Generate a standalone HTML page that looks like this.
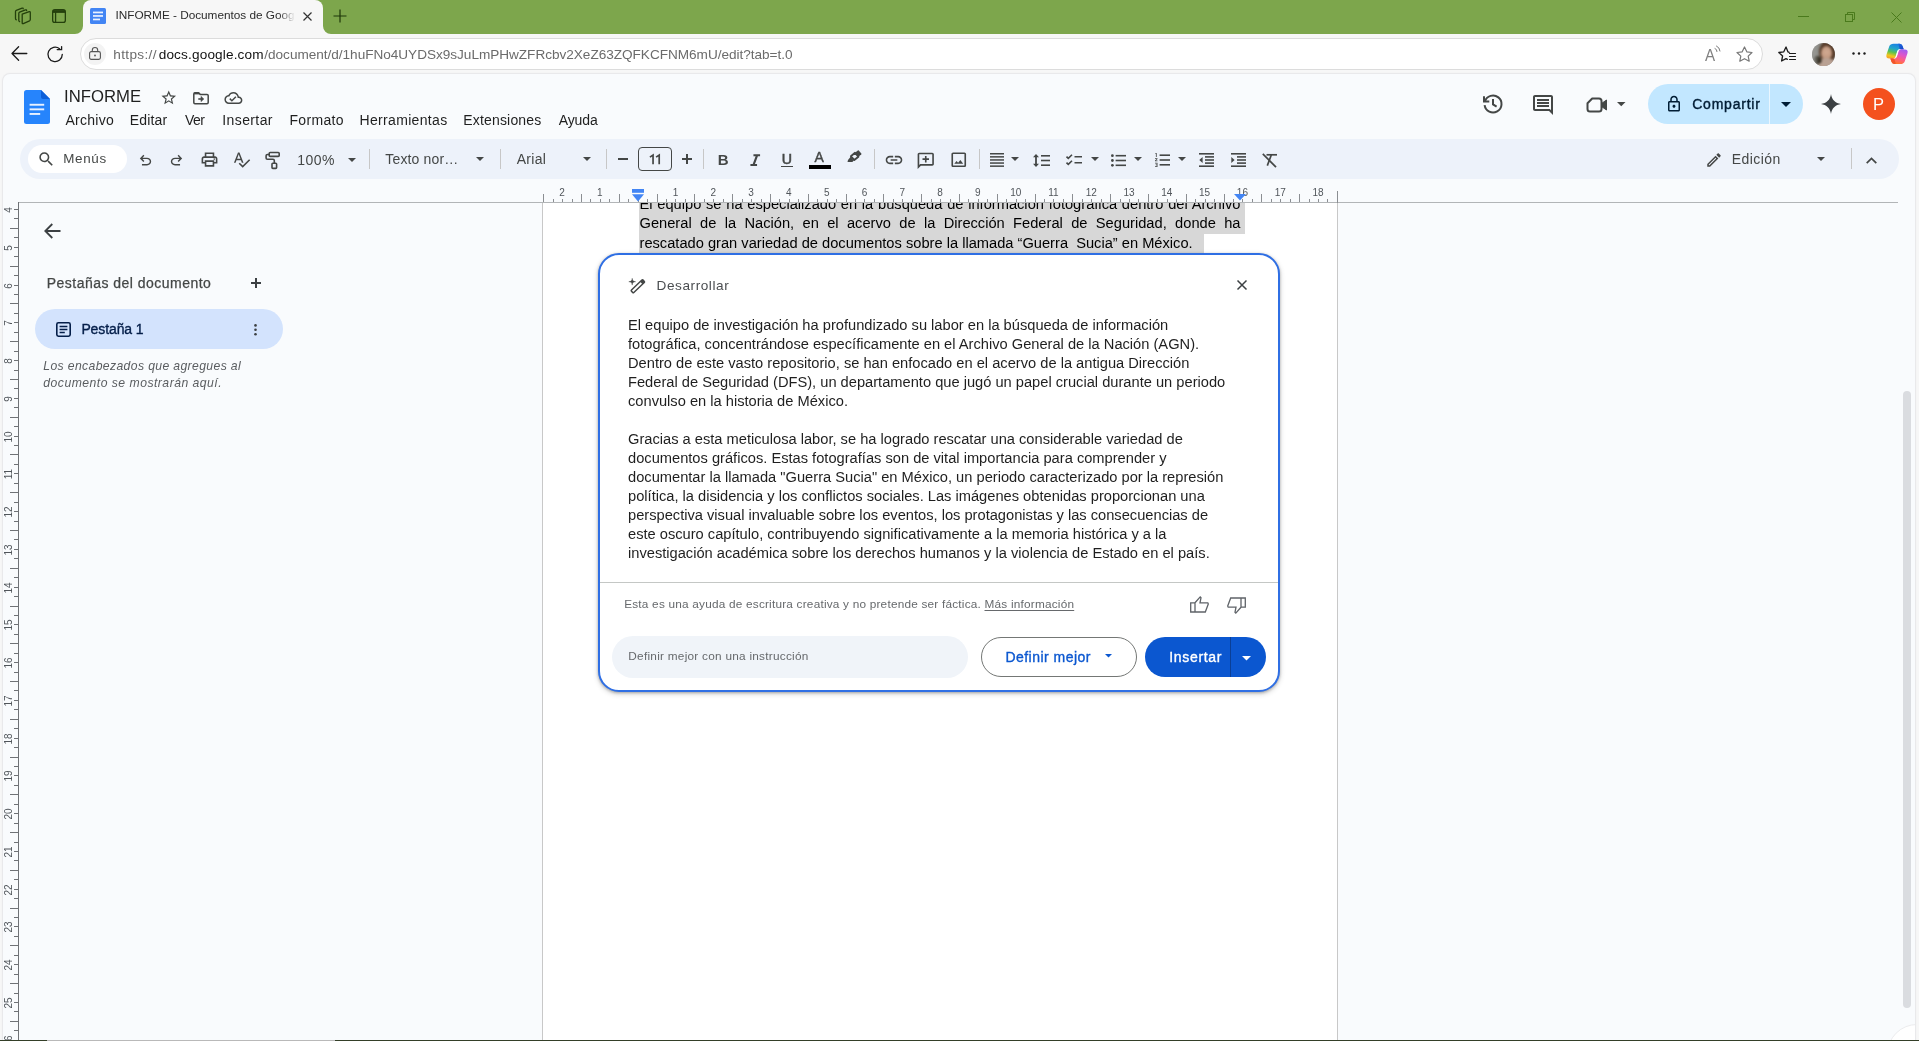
<!DOCTYPE html>
<html lang="es">
<head>
<meta charset="utf-8">
<title>INFORME - Documentos de Google</title>
<style>
*{box-sizing:border-box;margin:0;padding:0}
html,body{width:1919px;height:1041px;overflow:hidden;background:#f7f7f7;font-family:"Liberation Sans",sans-serif;color:#1f1f1f}
#root{position:absolute;left:0;top:0;width:1919px;height:1041px;overflow:hidden;will-change:transform}
.abs{position:absolute}
.t{position:absolute;white-space:nowrap;line-height:1;transform-origin:0 50%}
svg{position:absolute;overflow:visible}
/* ---------- browser chrome ---------- */
#titlebar{left:0;top:0;width:1919px;height:34px;background:#7da64c}
#tab{left:83px;top:0;width:240px;height:34px;background:#f7f7f7;border-radius:8px 8px 0 0}
#navbar{left:0;top:34px;width:1919px;height:41px;background:#f7f7f7}
#urlpill{left:80px;top:38px;width:1683px;height:32px;background:#fff;border:1px solid #dcdcdc;border-radius:16px}
.mn{top:113px;font-size:14px;color:#1f1f1f}
.rn{font-size:10px;color:#50555a}
.dl{position:absolute;left:0;width:601px;font-size:14.667px;line-height:19.400px;height:19.400px;color:#000}
.bl{left:628px;font-size:14.667px;line-height:19px;color:#1f1f1f}
/* ---------- docs app ---------- */
#app{left:3px;top:74px;width:1912px;height:967px;background:#f9fbfd;border-radius:7px 7px 0 0;box-shadow:0 0 0 1px #e9e9eb,0 0 3px rgba(0,0,0,.08)}
#toolbar{left:20px;top:139px;width:1879px;height:40px;background:#edf2fa;border-radius:20px}
#menus{left:28px;top:145px;width:99px;height:28px;background:#fff;border-radius:14px}
#page{left:542px;top:203px;width:796px;height:838px;background:#fff;border-left:1px solid #c8c8c8;border-right:1px solid #c8c8c8}
#rulerline{left:18px;top:202px;width:1880px;height:1px;background:#b2b5b7}
#vrulerline{left:18px;top:202px;width:1px;height:839px;background:#6f7276}
</style>
</head>
<body>
<div id="root">
<!-- BROWSER CHROME -->
<div class="abs" id="titlebar"></div>
<div class="abs" id="tab"></div>
<div class="abs" id="navbar"></div>
<div class="abs" id="urlpill"></div>

<!-- tab concave corners -->
<svg style="left:75px;top:26px" width="8" height="8"><path d="M8 0 V8 H0 A8 8 0 0 0 8 0Z" fill="#f7f7f7"/></svg>
<svg style="left:323px;top:26px" width="8" height="8"><path d="M0 0 V8 H8 A8 8 0 0 1 0 0Z" fill="#f7f7f7"/></svg>
<!-- workspaces icon -->
<svg style="left:14px;top:7px" width="18" height="18" viewBox="0 0 18 18" fill="none" stroke="#24400c" stroke-width="1.3" stroke-linejoin="round" stroke-linecap="round">
<path d="M8.2 7.2 L15.3 4.6 Q16.3 4.3 16.3 5.4 V12.6 Q16.3 13.4 15.5 13.8 L9.3 16.6 Q8.2 17 8.2 15.9 Z"/>
<path d="M12.6 3.6 Q12.6 2.5 11.5 2.9 L5.6 5.2 Q4.8 5.5 4.8 6.4 V13.6 Q4.8 14.4 5.6 14.7"/>
<path d="M9.2 1.8 Q9.2 0.8 8.1 1.2 L2.3 3.4 Q1.5 3.7 1.5 4.6 V11.6 Q1.5 12.5 2.3 12.8"/>
</svg>
<!-- tab actions icon -->
<svg style="left:52px;top:9px" width="14" height="14" viewBox="0 0 14 14" fill="none" stroke="#24400c" stroke-width="1.3">
<rect x="0.65" y="0.65" width="12.7" height="12.7" rx="2.2"/><path d="M1 2.500 H13" stroke-width="2.800"/><path d="M3.6 3 V13.3"/>
</svg>
<!-- favicon -->
<svg style="left:90px;top:8px" width="16" height="16" viewBox="0 0 16 16"><rect width="16" height="16" rx="1.5" fill="#4285f4"/><rect x="3" y="3.6" width="10" height="1.7" fill="#eaf2ff"/><rect x="3" y="7.1" width="10" height="1.7" fill="#eaf2ff"/><rect x="3" y="10.6" width="7" height="1.7" fill="#eaf2ff"/></svg>
<div class="t" id="tabtitle" style="left:115.50px;font-size:11.8px;letter-spacing:-0.021px;top:9.600px;color:#2b2b2b;width:180px;overflow:hidden;-webkit-mask-image:linear-gradient(90deg,#000 163px,transparent 179px);mask-image:linear-gradient(90deg,#000 163px,transparent 179px)">INFORME - Documentos de Google</div>
<svg style="left:303px;top:12px" width="9" height="9" viewBox="0 0 9 9" stroke="#333" stroke-width="1.2" fill="none"><path d="M0.5 0.5 L8.5 8.5 M8.5 0.5 L0.5 8.5"/></svg>
<svg style="left:333px;top:9px" width="14" height="14" viewBox="0 0 14 14" stroke="#1d3608" stroke-width="1.2" fill="none"><path d="M7 0.5 V13.5 M0.5 7 H13.5"/></svg>
<!-- window controls -->
<svg style="left:1798px;top:16px" width="11" height="1"><rect width="11" height="1" fill="#4a7a1c"/></svg>
<svg style="left:1845px;top:12px" width="10" height="10" viewBox="0 0 10 10" fill="none" stroke="#4a7a1c" stroke-width="1"><rect x="0.5" y="2.5" width="7" height="7"/><path d="M2.5 2.5 V0.5 H9.5 V7.5 H7.5"/></svg>
<svg style="left:1891px;top:12px" width="11" height="11" viewBox="0 0 11 11" stroke="#4a7a1c" stroke-width="1" fill="none"><path d="M0.5 0.5 L10.5 10.5 M10.5 0.5 L0.5 10.5"/></svg>
<!-- nav buttons -->
<svg style="left:11px;top:46px" width="17" height="15" viewBox="0 0 17 15" fill="none" stroke="#1b1b1b" stroke-width="1.3" stroke-linecap="round" stroke-linejoin="round"><path d="M15.8 7.5 H1 M7.6 0.8 L1 7.5 L7.6 14.2"/></svg>
<svg style="left:47px;top:46px" width="17" height="17" viewBox="0 0 17 17" fill="none" stroke="#1b1b1b" stroke-width="1.3" stroke-linecap="round" stroke-linejoin="round"><path d="M15.3 8.3 A7.2 7.2 0 1 1 12.6 2.7"/><path d="M10.2 3.6 H14.6 V0.6" stroke-linejoin="miter"/></svg>
<!-- lock -->
<div class="abs" style="left:84px;top:43px;width:22px;height:22px;border-radius:11px;background:#f3f3f3"></div>
<svg style="left:89px;top:47px" width="12" height="13" viewBox="0 0 12 13" fill="none" stroke="#555" stroke-width="1.1"><rect x="0.6" y="4.6" width="10.8" height="7.8" rx="1.6"/><path d="M3.3 4.6 V3.2 A2.7 2.7 0 0 1 8.7 3.2 V4.6"/><circle cx="6" cy="8.5" r="0.9" fill="#555" stroke="none"/></svg>
<div class="t" id="url1" style="left:113.30px;font-size:13.6px;letter-spacing:0.339px;top:47.500px;color:#6b6b6b">https://</div>
<div class="t" id="url2" style="left:158.70px;font-size:13.6px;letter-spacing:0.154px;top:47.500px;color:#111">docs.google.com</div>
<div class="t" id="url3" style="left:264.30px;font-size:13.6px;letter-spacing:-0.025px;top:47.500px;color:#6b6b6b">/document/d/1huFNo4UYDSx9sJuLmPHwZFRcbv2XeZ63ZQFKCFNM6mU/edit?tab=t.0</div>
<!-- read aloud -->
<div class="t" style="left:1704.500px;top:46.500px;font-size:16.500px;color:#808080;transform:scaleX(.92)">A</div>
<svg style="left:1713.500px;top:44.500px" width="8" height="10" viewBox="0 0 8 10" fill="none" stroke="#777" stroke-width="1" stroke-linecap="round"><path d="M1 3.5 A3 3 0 0 1 3 6.5"/><path d="M2.5 1 A6 6 0 0 1 6 6"/></svg>
<!-- star -->
<svg style="left:1736px;top:46px" width="17" height="16" viewBox="0 0 17 16" fill="none" stroke="#777" stroke-width="1.2" stroke-linejoin="round"><path d="M8.5 1 L10.8 5.8 L16 6.5 L12.2 10.1 L13.2 15.2 L8.5 12.7 L3.8 15.2 L4.8 10.1 L1 6.5 L6.2 5.8 Z"/></svg>
<!-- favorites -->
<svg style="left:1778px;top:46px" width="19" height="16" viewBox="0 0 19 16" fill="none" stroke="#1b1b1b" stroke-width="1.3" stroke-linejoin="round" stroke-linecap="round"><path d="M11.2 6.3 L10 5.9 L8 1 L5.8 5.8 L0.8 6.5 L4.6 10 L3.6 15 L8 12.6 L9.4 13.3"/><path d="M11.5 7.5 H17.5 M11.5 10.5 H17.5 M11.5 13.5 H17.5" stroke-width="1.2"/></svg>
<!-- profile -->
<div class="abs" style="left:1811.500px;top:42.500px;width:23px;height:23px;border-radius:50%;overflow:hidden;background:#8c8b86"><div class="abs" style="left:0;top:0;width:23px;height:23px;filter:blur(.9px)">
<div class="abs" style="left:7px;top:-2px;width:17px;height:22px;border-radius:50%;background:#553a28"></div>
<div class="abs" style="left:9.500px;top:3.500px;width:11px;height:14px;border-radius:50%;background:radial-gradient(circle at 50% 45%,#d3ab93 0,#c39a82 55%,#a07a63 100%)"></div>
<div class="abs" style="left:5px;top:15px;width:19px;height:12px;border-radius:50% 50% 0 0;background:#b9a193"></div>
<div class="abs" style="left:2.500px;top:13px;width:7px;height:8px;border-radius:40%;background:#2a2418;transform:rotate(-35deg)"></div>
<div class="abs" style="left:0;top:0;width:8px;height:23px;background:linear-gradient(90deg,#9a9a96,rgba(154,154,150,0))"></div>
</div></div>
<!-- dots -->
<svg style="left:1852px;top:52px" width="14" height="3" viewBox="0 0 14 3" fill="#1b1b1b"><circle cx="1.5" cy="1.5" r="1.2"/><circle cx="7" cy="1.5" r="1.2"/><circle cx="12.5" cy="1.5" r="1.2"/></svg>
<!-- copilot -->
<svg style="left:1885px;top:43px" width="24" height="22" viewBox="0 0 24 22">
<defs>
<linearGradient id="cpa" x1="0.600" y1="0" x2="0.300" y2="1"><stop offset="0" stop-color="#1a7fe6"/><stop offset="0.350" stop-color="#22a6c8"/><stop offset="0.600" stop-color="#5cc24f"/><stop offset="0.850" stop-color="#f2c61c"/><stop offset="1" stop-color="#f5a524"/></linearGradient>
<linearGradient id="cpb" x1="0.700" y1="0" x2="0.300" y2="1"><stop offset="0" stop-color="#a45cf0"/><stop offset="0.350" stop-color="#e055c8"/><stop offset="0.650" stop-color="#ff5f7e"/><stop offset="1" stop-color="#ff7a1f"/></linearGradient>
<linearGradient id="cpc" x1="0" y1="0" x2="1" y2="1"><stop offset="0" stop-color="#1c6fe0"/><stop offset="1" stop-color="#1a3fc4"/></linearGradient>
</defs>
<path d="M8.500 0.800 H14.500 Q16.600 0.800 17.400 2.800 L18.600 6 H15 Q13 6 12.300 8 L10.600 13.400 Q10 15.400 8 15.400 H4.500 Q0.300 15.400 1.600 11.200 L4.200 3.600 Q5.200 0.800 8.500 0.800Z" fill="url(#cpa)"/>
<path d="M13.200 0.800 H14.500 Q16.600 0.800 17.400 2.800 L18.800 6.600 H16.200 Q15 6.600 14.500 5.200Z" fill="url(#cpc)"/>
<path d="M15.500 21 H9.500 Q7.400 21 6.600 19 L5.400 15.800 H9 Q11 15.800 11.700 13.800 L13.400 8.400 Q14 6.400 16 6.400 H19.500 Q23.700 6.400 22.400 10.600 L19.800 18.200 Q18.800 21 15.500 21Z" fill="url(#cpb)"/>
<path d="M10.800 21 H9.500 Q7.400 21 6.600 19 L5.200 15.200 H7.800 Q9 15.200 9.500 16.600Z" fill="#f2542d"/><path d="M12.600 7.600 L10.900 13 Q10.500 14.400 11.400 14.600 L11.900 13.400 L13.400 8.800 Q13.800 7.500 12.600 7.600Z" fill="#fff" opacity=".92"/>
</svg>


<!-- DOCS APP -->
<div class="abs" id="app"></div>

<!-- docs icon -->
<svg style="left:24px;top:90px" width="26" height="34" viewBox="0 0 26 34"><path d="M2.5 0 H17 L26 9 V31.5 Q26 34 23.5 34 H2.5 Q0 34 0 31.5 V2.5 Q0 0 2.5 0Z" fill="#2684fc"/><path d="M17 0 L26 9 H19 Q17 9 17 7Z" fill="#0d5fd8"/><rect x="5.6" y="13.8" width="14.6" height="1.9" fill="#e8f1ff"/><rect x="5.6" y="18.4" width="14.6" height="1.9" fill="#e8f1ff"/><rect x="5.6" y="23" width="10.6" height="1.9" fill="#e8f1ff"/></svg>
<div class="t" id="doctitle" style="left:63.73px;font-size:17.2px;transform:scaleX(0.9719);top:88px;color:#1f1f1f">INFORME</div>
<!-- star -->
<svg style="left:160px;top:89px" width="17.500" height="17.500" viewBox="0 0 24 24" fill="#444746"><path d="M22 9.24l-7.19-.62L12 2 9.19 8.63 2 9.24l5.46 4.73L5.82 21 12 17.27 18.18 21l-1.63-7.03L22 9.24zM12 15.4l-3.76 2.27 1-4.28-3.32-2.88 4.38-.38L12 6.1l1.71 4.04 4.38.38-3.32 2.88 1 4.28L12 15.4z"/></svg>
<!-- move folder -->
<svg style="left:193px;top:91.500px" width="16" height="12.500" viewBox="0 0 16 12.500" fill="none" stroke="#444746" stroke-width="1.500" stroke-linejoin="round"><path d="M0.800 2 Q0.800 0.800 2 0.800 H5.600 L7.200 2.400 H14 Q15.200 2.400 15.200 3.600 V10.500 Q15.200 11.700 14 11.700 H2 Q0.800 11.700 0.800 10.500Z"/><path d="M1 1.500 H6.300" stroke-width="1.800"/><path d="M5.300 7 H8.300" stroke-width="1.600"/><path d="M8 4.400 L10.800 7 L8 9.600Z" fill="#444746" stroke-width=".6"/></svg>
<!-- cloud done -->
<svg style="left:223.500px;top:88.800px" width="18.800" height="18" viewBox="0 0 24 24" fill="#444746"><path d="M19.350 10.040C18.670 6.590 15.640 4 12 4 9.110 4 6.600 5.640 5.350 8.040 2.340 8.360 0 10.910 0 14c0 3.310 2.690 6 6 6h13c2.760 0 5-2.240 5-5 0-2.640-2.050-4.780-4.650-4.960zM19 18H6c-2.210 0-4-1.790-4-4 0-2.050 1.530-3.760 3.560-3.970l1.070-.11.500-.95C8.080 7.140 9.940 6 12 6c2.620 0 4.880 1.860 5.390 4.430l.3 1.500 1.530.11c1.560.1 2.780 1.410 2.780 2.960 0 1.650-1.350 3-3 3zm-9-3.820l-2.090-2.090L6.500 13.500 10 17l6.010-6.010-1.410-1.410z"/></svg>
<!-- menus -->
<div class="t mn" id="m1" style="left:65.50px;font-size:14px;letter-spacing:0.267px;">Archivo</div>
<div class="t mn" id="m2" style="left:129.80px;font-size:14px;letter-spacing:0.158px;">Editar</div>
<div class="t mn" id="m3" style="left:185.00px;font-size:14px;letter-spacing:-0.526px;">Ver</div>
<div class="t mn" id="m4" style="left:222.30px;font-size:14px;letter-spacing:0.386px;">Insertar</div>
<div class="t mn" id="m5" style="left:289.50px;font-size:14px;letter-spacing:0.310px;">Formato</div>
<div class="t mn" id="m6" style="left:359.50px;font-size:14px;letter-spacing:0.334px;">Herramientas</div>
<div class="t mn" id="m7" style="left:463.20px;font-size:14px;letter-spacing:0.183px;">Extensiones</div>
<div class="t mn" id="m8" style="left:558.70px;font-size:14px;letter-spacing:-0.089px;">Ayuda</div>
<!-- history -->
<svg style="left:1481px;top:92px" width="24" height="24" viewBox="0 0 24 24" fill="none" stroke="#444746" stroke-width="2" stroke-linecap="butt" stroke-linejoin="miter"><path d="M3.900 9.500 A8.500 8.500 0 1 1 3.600 13.200"/><path d="M3 4.300 V9.600 H8.300"/><path d="M12 7 V12.400 L15.600 14.600"/></svg>
<!-- comments -->
<svg style="left:1531px;top:93px" width="24" height="24" viewBox="0 0 24 24" fill="#444746"><path d="M20 2H4c-1.100 0-2 .9-2 2v12c0 1.100.9 2 2 2h14l4 4V4c0-1.100-.9-2-2-2zm0 15.170L18.830 16H4V4h16v13.170zM6 6h12v2H6zm0 3h12v2H6zm0 3h12v2H6z" transform="translate(0,0)"/></svg>
<!-- camera -->
<svg style="left:1585px;top:92px" width="24" height="24" viewBox="0 0 24 24" fill="none" stroke="#444746" stroke-width="2"><path d="M7.200 6.500 H14 Q16.500 6.500 16.500 9 V17 Q16.500 19.500 14 19.500 H5 Q2.500 19.500 2.500 17 V11.200Z" stroke-linejoin="round"/><path d="M16.500 11.500 L21.500 8 V18 L16.500 14.500Z" fill="#444746" stroke-width="1"/></svg>
<svg style="left:1616.800px;top:101.800px" width="8.500" height="4.400" viewBox="0 0 10 5" fill="#444746"><path d="M0 0 H10 L5 5Z"/></svg>
<!-- share -->
<div class="abs" style="left:1648px;top:84px;width:155px;height:40px;border-radius:20px;background:#c2e7ff"></div>
<div class="abs" style="left:1769px;top:84px;width:1px;height:40px;background:#eaf6ff"></div>
<svg style="left:1665px;top:95px" width="18" height="18" viewBox="0 0 24 24" fill="#001d35"><path d="M18 8h-1V6c0-2.760-2.240-5-5-5S7 3.240 7 6v2H6c-1.100 0-2 .9-2 2v10c0 1.100.9 2 2 2h12c1.100 0 2-.9 2-2V10c0-1.100-.9-2-2-2zM9 6c0-1.660 1.340-3 3-3s3 1.340 3 3v2H9V6zm9 14H6V10h12v10zm-6-3c1.100 0 2-.9 2-2s-.9-2-2-2-2 .9-2 2 .9 2 2 2z"/></svg>
<div class="t" id="share" style="left:1692.20px;font-size:14px;letter-spacing:0.776px;top:97px;color:#001d35;-webkit-text-stroke:.4px #001d35">Compartir</div>
<svg style="left:1781px;top:102px" width="10" height="5" viewBox="0 0 10 5" fill="#001d35"><path d="M0 0 H10 L5 5Z"/></svg>
<!-- gemini spark -->
<svg style="left:1821px;top:94px" width="20" height="20" viewBox="0 0 20 20" fill="#3c4043"><path d="M10 0 C10.600 5.500 14.500 9.400 20 10 C14.500 10.600 10.600 14.500 10 20 C9.400 14.500 5.500 10.600 0 10 C5.500 9.400 9.400 5.500 10 0Z"/></svg>
<!-- avatar -->
<div class="abs" style="left:1863px;top:88px;width:32px;height:32px;border-radius:16px;background:#f4511e"></div>
<div class="t" style="left:1873px;top:96px;font-size:16.500px;color:#fff">P</div>


<div class="abs" id="toolbar"></div>
<div class="abs" id="menus"></div>
<svg style="left:36.75px;top:150.25px" width="18.5" height="18.5" viewBox="0 0 24 24" fill="#444746" ><path d="M15.500 14h-.79l-.28-.27A6.471 6.471 0 0 0 16 9.500 6.500 6.500 0 1 0 9.500 16c1.610 0 3.090-.59 4.230-1.570l.27.28v.79l5 4.990L20.490 19l-4.990-5zm-6 0C7.010 14 5 11.990 5 9.500S7.010 5 9.500 5 14 7.010 14 9.500 11.990 14 9.500 14z"/></svg>
<div class="t" id="tmenus" style="left:63.30px;font-size:13.4px;letter-spacing:0.651px;top:152px;color:#444746">Menús</div>
<svg style="left:136.7px;top:151.7px" width="17" height="17" viewBox="0 0 24 24" fill="#444746" ><path d="M7 19v-2h7.100c1.050 0 1.960-.33 2.740-1s1.160-1.500 1.160-2.500-.39-1.830-1.160-2.500S15.150 10 14.100 10H7.800l2.600 2.600L9 14 4 9l5-5 1.400 1.400L7.800 8h6.300c1.620 0 3 .53 4.160 1.580C19.420 10.630 20 11.930 20 13.500s-.58 2.880-1.740 3.930C17.100 18.480 15.720 19 14.100 19H7z"/></svg>
<svg style="left:168.1px;top:151.7px" width="17" height="17" viewBox="0 0 24 24" fill="#444746" ><path d="M17 19v-2H9.900c-1.050 0-1.960-.33-2.740-1S6 14.500 6 13.500s.39-1.830 1.160-2.500S8.850 10 9.900 10h6.300l-2.600 2.600L15 14l5-5-5-5-1.400 1.400L16.200 8H9.900c-1.620 0-3 .53-4.160 1.580C4.580 10.630 4 11.930 4 13.500s.58 2.880 1.740 3.930C6.900 18.480 8.280 19 9.900 19H17z"/></svg>
<svg style="left:199.5px;top:150.2px" width="19" height="19" viewBox="0 0 24 24" fill="#444746" ><path d="M19 8h-1V3H6v5H5c-1.660 0-3 1.340-3 3v6h4v4h12v-4h4v-6c0-1.660-1.340-3-3-3zM8 5h8v3H8V5zm8 12v2H8v-4h8v2zm2-2v-2H6v2H4v-4c0-.55.45-1 1-1h14c.55 0 1 .45 1 1v4h-2z"/><circle cx="18" cy="11.500" r="1"/></svg>
<svg style="left:231.5px;top:150.2px" width="19" height="19" viewBox="0 0 24 24" fill="#444746" ><path d="M12.450 16h2.090L9.430 3H7.570L2.460 16h2.090l1.120-3h5.640l1.140 3zm-6.020-5L8.500 5.480 10.570 11H6.430zm15.160.59l-8.090 8.090L9.830 16l-1.410 1.410 5.090 5.090L23 13l-1.410-1.410z"/></svg>
<svg style="left:263.500px;top:150.400px" width="17" height="20" viewBox="0 0 17 20" fill="none" stroke="#444746" stroke-width="1.600" stroke-linejoin="round"><rect x="5.200" y="2.500" width="10" height="3.900" rx="1"/><path d="M5.200 4.500 H3.400 Q2.100 4.500 2.100 5.800 V8 Q2.100 9.300 3.400 9.300 H9 Q10.300 9.300 10.300 10.600 V13.200"/><rect x="8" y="13.200" width="4.600" height="5.200" rx="0.800"/></svg>
<div class="t" id="tzoom" style="left:297.30px;font-size:14px;letter-spacing:0.447px;top:153px;color:#444746">100%</div>
<svg style="left:347.5px;top:157.5px" width="8" height="4.200" viewBox="0 0 10 5" fill="#444746"><path d="M0 0 H10 L5 5Z"/></svg>
<div class="abs" style="left:369px;top:149px;width:1px;height:20px;background:#c7c7c7"></div>
<div class="t" id="tstyle" style="left:385.30px;font-size:14px;letter-spacing:0.146px;top:152px;color:#444746">Texto nor…</div>
<svg style="left:476.1px;top:157.0px" width="8" height="4.200" viewBox="0 0 10 5" fill="#444746"><path d="M0 0 H10 L5 5Z"/></svg>
<div class="abs" style="left:500px;top:149px;width:1px;height:20px;background:#c7c7c7"></div>
<div class="t" id="tfont" style="left:516.70px;font-size:14px;letter-spacing:0.276px;top:152px;color:#444746">Arial</div>
<svg style="left:582.5px;top:157.0px" width="8" height="4.200" viewBox="0 0 10 5" fill="#444746"><path d="M0 0 H10 L5 5Z"/></svg>
<div class="abs" style="left:606px;top:149px;width:1px;height:20px;background:#c7c7c7"></div>
<div class="abs" style="left:618px;top:158px;width:10px;height:2px;background:#444746"></div>
<div class="abs" style="left:638px;top:147px;width:34px;height:24px;border:1px solid #444746;border-radius:4px"></div>
<svg style="left:649px;top:153.500px" width="12" height="11" viewBox="0 0 12 11" fill="none" stroke="#444746" stroke-width="1.700" stroke-linejoin="miter"><path d="M0.900 3.100 L4.050 1.100 V10.250"/><path d="M7.100 3.100 L10.200 1.100 V10.250"/></svg>
<div class="abs" style="left:682px;top:158px;width:10px;height:2px;background:#444746"></div><div class="abs" style="left:686px;top:154px;width:2px;height:10px;background:#444746"></div>
<div class="abs" style="left:703px;top:149px;width:1px;height:20px;background:#c7c7c7"></div>
<div class="t" style="left:717.800px;top:151.800px;font-size:15px;font-weight:bold;color:#444746">B</div>
<svg style="left:749.700px;top:153.700px" width="10.500" height="12.300" viewBox="0 0 11 13" fill="#444746"><path d="M3.600 0.300 H10.600 V2.300 H8.300 L5.200 10.700 H7.400 V12.700 H0.400 V10.700 H2.800 L5.900 2.300 H3.600Z"/></svg>
<div class="t" style="left:781.800px;top:152px;font-size:14.200px;color:#444746;-webkit-text-stroke:.55px #444746">U</div><div class="abs" style="left:781px;top:165.600px;width:12px;height:1.400px;background:#444746"></div>
<div class="t" style="left:814.500px;top:149.500px;font-size:14px;color:#444746;-webkit-text-stroke:.4px #444746">A</div><div class="abs" style="left:809px;top:165px;width:22px;height:4px;background:#000"></div>
<svg style="left:847px;top:149.500px" width="15" height="13" viewBox="0 0 15 13"><path d="M8 2.800 L10.800 0.400 Q11.300 0 11.800 0.500 L14.300 3.400 Q14.700 3.900 14.200 4.400 L11.400 6.700Z" fill="#444746"/><path d="M8 2.800 L11.400 6.700 L7.300 10.100 L3.900 6.200Z" fill="none" stroke="#444746" stroke-width="1.900" stroke-linejoin="round"/><path d="M3.600 6.800 L6.800 10.500 L5.400 12 H0.500 L1 10Z" fill="#444746"/></svg>
<div class="abs" style="left:874px;top:149px;width:1px;height:20px;background:#c7c7c7"></div>
<svg style="left:884.0px;top:149.8px" width="20" height="20" viewBox="0 0 24 24" fill="#444746" ><path d="M3.900 12c0-1.710 1.390-3.100 3.100-3.100h4V7H7c-2.760 0-5 2.240-5 5s2.240 5 5 5h4v-1.900H7c-1.710 0-3.100-1.390-3.100-3.100zM8 13h8v-2H8v2zm9-6h-4v1.900h4c1.710 0 3.100 1.390 3.100 3.100s-1.390 3.100-3.100 3.100h-4V17h4c2.760 0 5-2.240 5-5s-2.240-5-5-5z"/></svg>
<svg style="left:916.25px;top:150.55px" width="19.5" height="19.5" viewBox="0 0 24 24" fill="#444746" ><path d="M20 2H4c-1.100 0-2 .9-2 2v18l4-4h14c1.100 0 2-.9 2-2V4c0-1.100-.9-2-2-2zm0 14H5.170L4 17.170V4h16v12zM11 14h2v-3h3V9h-3V6h-2v3H8v2h3v3z"/></svg>
<svg style="left:949.25px;top:150.05px" width="19.5" height="19.5" viewBox="0 0 24 24" fill="#444746" ><path d="M19 3H5c-1.100 0-2 .9-2 2v14c0 1.100.9 2 2 2h14c1.100 0 2-.9 2-2V5c0-1.100-.9-2-2-2zm0 16H5V5h14v14zm-5.040-6.710l-2.750 3.540-1.960-2.360L6.500 17h11l-3.540-4.710z"/></svg>
<div class="abs" style="left:979px;top:149px;width:1px;height:20px;background:#c7c7c7"></div>
<svg style="left:990px;top:152.500px" width="14" height="14" viewBox="0 0 14 14" fill="#444746"><rect y="0" width="14" height="1.500"/><rect y="3.100" width="14" height="1.500"/><rect y="6.200" width="14" height="1.500"/><rect y="9.300" width="14" height="1.500"/><rect y="12.400" width="14" height="1.500"/></svg>
<svg style="left:1010.5px;top:157.3px" width="8" height="4.200" viewBox="0 0 10 5" fill="#444746"><path d="M0 0 H10 L5 5Z"/></svg>
<svg style="left:1032.500px;top:153.500px" width="17" height="13" viewBox="0 0 17 13" fill="#444746"><path d="M3 0 L6 3.200 H3.900 V9.800 H6 L3 13 L0 9.800 H2.100 V3.200 H0Z"/><rect x="8" y="1" width="9" height="1.600"/><rect x="8" y="5.700" width="9" height="1.600"/><rect x="8" y="10.400" width="9" height="1.600"/></svg>
<svg style="left:1065.500px;top:154px" width="16" height="12" viewBox="0 0 16 12" fill="none" stroke="#444746" stroke-width="1.600"><path d="M0.500 2.600 L2.300 4.400 L6 0.700"/><path d="M0.500 8.600 L2.300 10.400 L6 6.700"/><path d="M8.500 2.700 H16 M8.500 8.700 H16"/></svg>
<svg style="left:1090.5px;top:157.3px" width="8" height="4.200" viewBox="0 0 10 5" fill="#444746"><path d="M0 0 H10 L5 5Z"/></svg>
<svg style="left:1110.500px;top:153.500px" width="15" height="13" viewBox="0 0 15 13" fill="#444746"><circle cx="1.400" cy="1.700" r="1.400"/><circle cx="1.400" cy="6.500" r="1.400"/><circle cx="1.400" cy="11.300" r="1.400"/><rect x="4.600" y="0.900" width="10.400" height="1.600"/><rect x="4.600" y="5.700" width="10.400" height="1.600"/><rect x="4.600" y="10.500" width="10.400" height="1.600"/></svg>
<svg style="left:1134.3px;top:157.3px" width="8" height="4.200" viewBox="0 0 10 5" fill="#444746"><path d="M0 0 H10 L5 5Z"/></svg>
<svg style="left:1154.500px;top:153px" width="15" height="14" viewBox="0 0 15 14" fill="#444746"><rect x="4.600" y="1.400" width="10.400" height="1.600"/><rect x="4.600" y="6.200" width="10.400" height="1.600"/><rect x="4.600" y="11" width="10.400" height="1.600"/><path d="M0.300 0 H1.700 V4 H0.900 V0.800 H0.300Z"/><path d="M0 5.200 H2.500 V6 L1 7.400 H2.500 V8.200 H0 V7.400 L1.500 6 H0Z"/><path d="M0 9.800 H2.500 V14 H0 V13.200 H1.700 V12.300 H0.700 V11.500 H1.700 V10.600 H0Z"/></svg>
<svg style="left:1178.3px;top:157.3px" width="8" height="4.200" viewBox="0 0 10 5" fill="#444746"><path d="M0 0 H10 L5 5Z"/></svg>
<svg style="left:1198.500px;top:152.500px" width="15" height="14" viewBox="0 0 15 14" fill="#444746"><rect y="0" width="15" height="1.600"/><rect y="12.400" width="15" height="1.600"/><rect x="6" y="3.100" width="9" height="1.600"/><rect x="6" y="6.200" width="9" height="1.600"/><rect x="6" y="9.300" width="9" height="1.600"/><path d="M3.600 4 V10 L0.300 7Z"/></svg>
<svg style="left:1230.500px;top:152.500px" width="15" height="14" viewBox="0 0 15 14" fill="#444746"><rect y="0" width="15" height="1.600"/><rect y="12.400" width="15" height="1.600"/><rect x="6" y="3.100" width="9" height="1.600"/><rect x="6" y="6.200" width="9" height="1.600"/><rect x="6" y="9.300" width="9" height="1.600"/><path d="M0.300 4 V10 L3.600 7Z"/></svg>
<svg style="left:1262px;top:153px" width="16" height="15" viewBox="0 0 16 15" fill="none" stroke="#444746" stroke-width="1.700"><path d="M4.500 1.800 H15"/><path d="M9.300 2 L5.300 12.600"/><path d="M0.800 0.800 L14 14.200"/></svg>
<svg style="left:1705.0px;top:150.5px" width="18" height="18" viewBox="0 0 24 24" fill="#444746" ><path d="M3 17.250V21h3.750L17.810 9.940l-3.750-3.750L3 17.250zM5.920 19H5v-.92l9.060-9.060.92.920L5.920 19zM20.710 5.630l-2.340-2.340c-.2-.2-.45-.29-.71-.29s-.51.1-.7.290l-1.830 1.830 3.750 3.750 1.830-1.830c.39-.39.390-1.020 0-1.410z"/></svg>
<div class="t" id="tedit" style="left:1731.70px;font-size:14px;letter-spacing:0.445px;top:152px;color:#444746">Edición</div>
<svg style="left:1816.5px;top:156.5px" width="8" height="4.200" viewBox="0 0 10 5" fill="#444746"><path d="M0 0 H10 L5 5Z"/></svg>
<div class="abs" style="left:1851px;top:148px;width:1px;height:21px;background:#c7c7c7"></div>
<svg style="left:1865.500px;top:156.500px" width="11" height="7" viewBox="0 0 11 7" fill="none" stroke="#444746" stroke-width="1.700"><path d="M0.700 6.200 L5.500 1.400 L10.300 6.200"/></svg>

<!-- RULERS -->
<div class="abs" id="rulerline"></div>
<div class="abs" id="vrulerline"></div>
<div class="abs" id="page"></div>
<svg style="left:0;top:185px" width="1919" height="18" viewBox="0 0 1919 18" shape-rendering="crispEdges"><rect x="543" y="9" width="1" height="8" fill="#8b8e92"/><rect x="553" y="14" width="1" height="3" fill="#8b8e92"/><rect x="562" y="14" width="1" height="3" fill="#8b8e92"/><rect x="572" y="14" width="1" height="3" fill="#8b8e92"/><rect x="581" y="9" width="1" height="8" fill="#8b8e92"/><rect x="590" y="14" width="1" height="3" fill="#8b8e92"/><rect x="600" y="14" width="1" height="3" fill="#8b8e92"/><rect x="609" y="14" width="1" height="3" fill="#8b8e92"/><rect x="619" y="9" width="1" height="8" fill="#8b8e92"/><rect x="628" y="14" width="1" height="3" fill="#8b8e92"/><rect x="638" y="14" width="1" height="3" fill="#8b8e92"/><rect x="647" y="14" width="1" height="3" fill="#8b8e92"/><rect x="657" y="9" width="1" height="8" fill="#8b8e92"/><rect x="666" y="14" width="1" height="3" fill="#8b8e92"/><rect x="675" y="14" width="1" height="3" fill="#8b8e92"/><rect x="685" y="14" width="1" height="3" fill="#8b8e92"/><rect x="694" y="9" width="1" height="8" fill="#8b8e92"/><rect x="704" y="14" width="1" height="3" fill="#8b8e92"/><rect x="713" y="14" width="1" height="3" fill="#8b8e92"/><rect x="723" y="14" width="1" height="3" fill="#8b8e92"/><rect x="732" y="9" width="1" height="8" fill="#8b8e92"/><rect x="742" y="14" width="1" height="3" fill="#8b8e92"/><rect x="751" y="14" width="1" height="3" fill="#8b8e92"/><rect x="761" y="14" width="1" height="3" fill="#8b8e92"/><rect x="770" y="9" width="1" height="8" fill="#8b8e92"/><rect x="779" y="14" width="1" height="3" fill="#8b8e92"/><rect x="789" y="14" width="1" height="3" fill="#8b8e92"/><rect x="798" y="14" width="1" height="3" fill="#8b8e92"/><rect x="808" y="9" width="1" height="8" fill="#8b8e92"/><rect x="817" y="14" width="1" height="3" fill="#8b8e92"/><rect x="827" y="14" width="1" height="3" fill="#8b8e92"/><rect x="836" y="14" width="1" height="3" fill="#8b8e92"/><rect x="846" y="9" width="1" height="8" fill="#8b8e92"/><rect x="855" y="14" width="1" height="3" fill="#8b8e92"/><rect x="864" y="14" width="1" height="3" fill="#8b8e92"/><rect x="874" y="14" width="1" height="3" fill="#8b8e92"/><rect x="883" y="9" width="1" height="8" fill="#8b8e92"/><rect x="893" y="14" width="1" height="3" fill="#8b8e92"/><rect x="902" y="14" width="1" height="3" fill="#8b8e92"/><rect x="912" y="14" width="1" height="3" fill="#8b8e92"/><rect x="921" y="9" width="1" height="8" fill="#8b8e92"/><rect x="931" y="14" width="1" height="3" fill="#8b8e92"/><rect x="940" y="14" width="1" height="3" fill="#8b8e92"/><rect x="950" y="14" width="1" height="3" fill="#8b8e92"/><rect x="959" y="9" width="1" height="8" fill="#8b8e92"/><rect x="968" y="14" width="1" height="3" fill="#8b8e92"/><rect x="978" y="14" width="1" height="3" fill="#8b8e92"/><rect x="987" y="14" width="1" height="3" fill="#8b8e92"/><rect x="997" y="9" width="1" height="8" fill="#8b8e92"/><rect x="1006" y="14" width="1" height="3" fill="#8b8e92"/><rect x="1016" y="14" width="1" height="3" fill="#8b8e92"/><rect x="1025" y="14" width="1" height="3" fill="#8b8e92"/><rect x="1035" y="9" width="1" height="8" fill="#8b8e92"/><rect x="1044" y="14" width="1" height="3" fill="#8b8e92"/><rect x="1053" y="14" width="1" height="3" fill="#8b8e92"/><rect x="1063" y="14" width="1" height="3" fill="#8b8e92"/><rect x="1072" y="9" width="1" height="8" fill="#8b8e92"/><rect x="1082" y="14" width="1" height="3" fill="#8b8e92"/><rect x="1091" y="14" width="1" height="3" fill="#8b8e92"/><rect x="1101" y="14" width="1" height="3" fill="#8b8e92"/><rect x="1110" y="9" width="1" height="8" fill="#8b8e92"/><rect x="1120" y="14" width="1" height="3" fill="#8b8e92"/><rect x="1129" y="14" width="1" height="3" fill="#8b8e92"/><rect x="1138" y="14" width="1" height="3" fill="#8b8e92"/><rect x="1148" y="9" width="1" height="8" fill="#8b8e92"/><rect x="1157" y="14" width="1" height="3" fill="#8b8e92"/><rect x="1167" y="14" width="1" height="3" fill="#8b8e92"/><rect x="1176" y="14" width="1" height="3" fill="#8b8e92"/><rect x="1186" y="9" width="1" height="8" fill="#8b8e92"/><rect x="1195" y="14" width="1" height="3" fill="#8b8e92"/><rect x="1205" y="14" width="1" height="3" fill="#8b8e92"/><rect x="1214" y="14" width="1" height="3" fill="#8b8e92"/><rect x="1224" y="9" width="1" height="8" fill="#8b8e92"/><rect x="1233" y="14" width="1" height="3" fill="#8b8e92"/><rect x="1242" y="14" width="1" height="3" fill="#8b8e92"/><rect x="1252" y="14" width="1" height="3" fill="#8b8e92"/><rect x="1261" y="9" width="1" height="8" fill="#8b8e92"/><rect x="1271" y="14" width="1" height="3" fill="#8b8e92"/><rect x="1280" y="14" width="1" height="3" fill="#8b8e92"/><rect x="1290" y="14" width="1" height="3" fill="#8b8e92"/><rect x="1299" y="9" width="1" height="8" fill="#8b8e92"/><rect x="1309" y="14" width="1" height="3" fill="#8b8e92"/><rect x="1318" y="14" width="1" height="3" fill="#8b8e92"/><rect x="1327" y="14" width="1" height="3" fill="#8b8e92"/><rect x="1337" y="9" width="1" height="8" fill="#8b8e92"/><rect x="1337" y="6" width="1" height="12" fill="#8b8e92"/></svg>
<div class="t rn" style="left:552.1px;top:187.5px;width:20px;text-align:center">2</div>
<div class="t rn" style="left:589.9px;top:187.5px;width:20px;text-align:center">1</div>
<div class="t rn" style="left:665.5px;top:187.5px;width:20px;text-align:center">1</div>
<div class="t rn" style="left:703.3px;top:187.5px;width:20px;text-align:center">2</div>
<div class="t rn" style="left:741.1px;top:187.5px;width:20px;text-align:center">3</div>
<div class="t rn" style="left:778.9px;top:187.5px;width:20px;text-align:center">4</div>
<div class="t rn" style="left:816.7px;top:187.5px;width:20px;text-align:center">5</div>
<div class="t rn" style="left:854.5px;top:187.5px;width:20px;text-align:center">6</div>
<div class="t rn" style="left:892.3px;top:187.5px;width:20px;text-align:center">7</div>
<div class="t rn" style="left:930.1px;top:187.5px;width:20px;text-align:center">8</div>
<div class="t rn" style="left:967.9px;top:187.5px;width:20px;text-align:center">9</div>
<div class="t rn" style="left:1005.7px;top:187.5px;width:20px;text-align:center">10</div>
<div class="t rn" style="left:1043.4px;top:187.5px;width:20px;text-align:center">11</div>
<div class="t rn" style="left:1081.2px;top:187.5px;width:20px;text-align:center">12</div>
<div class="t rn" style="left:1119.0px;top:187.5px;width:20px;text-align:center">13</div>
<div class="t rn" style="left:1156.8px;top:187.5px;width:20px;text-align:center">14</div>
<div class="t rn" style="left:1194.6px;top:187.5px;width:20px;text-align:center">15</div>
<div class="t rn" style="left:1232.4px;top:187.5px;width:20px;text-align:center">16</div>
<div class="t rn" style="left:1270.2px;top:187.5px;width:20px;text-align:center">17</div>
<div class="t rn" style="left:1308.0px;top:187.5px;width:20px;text-align:center">18</div>
<svg style="left:632px;top:189px" width="12" height="13" viewBox="0 0 12 13" fill="#4285f4"><rect width="12" height="3.800"/><path d="M0 5.200 H12 L6 12.500Z"/></svg>
<svg style="left:1234px;top:194px" width="12" height="7" viewBox="0 0 12 7" fill="#4285f4"><path d="M0 0 H12 L6 6.500Z"/></svg>
<svg style="left:0;top:203px" width="19" height="838" viewBox="0 0 19 838" shape-rendering="crispEdges"><rect x="14" y="6" width="4" height="1" fill="#6f7276"/><rect x="14" y="15" width="4" height="1" fill="#6f7276"/><rect x="10" y="25" width="8" height="1" fill="#6f7276"/><rect x="14" y="34" width="4" height="1" fill="#6f7276"/><rect x="14" y="44" width="4" height="1" fill="#6f7276"/><rect x="14" y="53" width="4" height="1" fill="#6f7276"/><rect x="10" y="63" width="8" height="1" fill="#6f7276"/><rect x="14" y="72" width="4" height="1" fill="#6f7276"/><rect x="14" y="82" width="4" height="1" fill="#6f7276"/><rect x="14" y="91" width="4" height="1" fill="#6f7276"/><rect x="10" y="100" width="8" height="1" fill="#6f7276"/><rect x="14" y="110" width="4" height="1" fill="#6f7276"/><rect x="14" y="119" width="4" height="1" fill="#6f7276"/><rect x="14" y="129" width="4" height="1" fill="#6f7276"/><rect x="10" y="138" width="8" height="1" fill="#6f7276"/><rect x="14" y="148" width="4" height="1" fill="#6f7276"/><rect x="14" y="157" width="4" height="1" fill="#6f7276"/><rect x="14" y="167" width="4" height="1" fill="#6f7276"/><rect x="10" y="176" width="8" height="1" fill="#6f7276"/><rect x="14" y="185" width="4" height="1" fill="#6f7276"/><rect x="14" y="195" width="4" height="1" fill="#6f7276"/><rect x="14" y="204" width="4" height="1" fill="#6f7276"/><rect x="10" y="214" width="8" height="1" fill="#6f7276"/><rect x="14" y="223" width="4" height="1" fill="#6f7276"/><rect x="14" y="233" width="4" height="1" fill="#6f7276"/><rect x="14" y="242" width="4" height="1" fill="#6f7276"/><rect x="10" y="251" width="8" height="1" fill="#6f7276"/><rect x="14" y="261" width="4" height="1" fill="#6f7276"/><rect x="14" y="270" width="4" height="1" fill="#6f7276"/><rect x="14" y="280" width="4" height="1" fill="#6f7276"/><rect x="10" y="289" width="8" height="1" fill="#6f7276"/><rect x="14" y="299" width="4" height="1" fill="#6f7276"/><rect x="14" y="308" width="4" height="1" fill="#6f7276"/><rect x="14" y="318" width="4" height="1" fill="#6f7276"/><rect x="10" y="327" width="8" height="1" fill="#6f7276"/><rect x="14" y="336" width="4" height="1" fill="#6f7276"/><rect x="14" y="346" width="4" height="1" fill="#6f7276"/><rect x="14" y="355" width="4" height="1" fill="#6f7276"/><rect x="10" y="365" width="8" height="1" fill="#6f7276"/><rect x="14" y="374" width="4" height="1" fill="#6f7276"/><rect x="14" y="384" width="4" height="1" fill="#6f7276"/><rect x="14" y="393" width="4" height="1" fill="#6f7276"/><rect x="10" y="403" width="8" height="1" fill="#6f7276"/><rect x="14" y="412" width="4" height="1" fill="#6f7276"/><rect x="14" y="421" width="4" height="1" fill="#6f7276"/><rect x="14" y="431" width="4" height="1" fill="#6f7276"/><rect x="10" y="440" width="8" height="1" fill="#6f7276"/><rect x="14" y="450" width="4" height="1" fill="#6f7276"/><rect x="14" y="459" width="4" height="1" fill="#6f7276"/><rect x="14" y="469" width="4" height="1" fill="#6f7276"/><rect x="10" y="478" width="8" height="1" fill="#6f7276"/><rect x="14" y="487" width="4" height="1" fill="#6f7276"/><rect x="14" y="497" width="4" height="1" fill="#6f7276"/><rect x="14" y="506" width="4" height="1" fill="#6f7276"/><rect x="10" y="516" width="8" height="1" fill="#6f7276"/><rect x="14" y="525" width="4" height="1" fill="#6f7276"/><rect x="14" y="535" width="4" height="1" fill="#6f7276"/><rect x="14" y="544" width="4" height="1" fill="#6f7276"/><rect x="10" y="554" width="8" height="1" fill="#6f7276"/><rect x="14" y="563" width="4" height="1" fill="#6f7276"/><rect x="14" y="572" width="4" height="1" fill="#6f7276"/><rect x="14" y="582" width="4" height="1" fill="#6f7276"/><rect x="10" y="591" width="8" height="1" fill="#6f7276"/><rect x="14" y="601" width="4" height="1" fill="#6f7276"/><rect x="14" y="610" width="4" height="1" fill="#6f7276"/><rect x="14" y="620" width="4" height="1" fill="#6f7276"/><rect x="10" y="629" width="8" height="1" fill="#6f7276"/><rect x="14" y="639" width="4" height="1" fill="#6f7276"/><rect x="14" y="648" width="4" height="1" fill="#6f7276"/><rect x="14" y="657" width="4" height="1" fill="#6f7276"/><rect x="10" y="667" width="8" height="1" fill="#6f7276"/><rect x="14" y="676" width="4" height="1" fill="#6f7276"/><rect x="14" y="686" width="4" height="1" fill="#6f7276"/><rect x="14" y="695" width="4" height="1" fill="#6f7276"/><rect x="10" y="705" width="8" height="1" fill="#6f7276"/><rect x="14" y="714" width="4" height="1" fill="#6f7276"/><rect x="14" y="723" width="4" height="1" fill="#6f7276"/><rect x="14" y="733" width="4" height="1" fill="#6f7276"/><rect x="10" y="742" width="8" height="1" fill="#6f7276"/><rect x="14" y="752" width="4" height="1" fill="#6f7276"/><rect x="14" y="761" width="4" height="1" fill="#6f7276"/><rect x="14" y="771" width="4" height="1" fill="#6f7276"/><rect x="10" y="780" width="8" height="1" fill="#6f7276"/><rect x="14" y="790" width="4" height="1" fill="#6f7276"/><rect x="14" y="799" width="4" height="1" fill="#6f7276"/><rect x="14" y="808" width="4" height="1" fill="#6f7276"/><rect x="10" y="818" width="8" height="1" fill="#6f7276"/><rect x="14" y="827" width="4" height="1" fill="#6f7276"/><rect x="14" y="837" width="4" height="1" fill="#6f7276"/></svg>
<div class="t rn" style="left:-1px;top:205.2px;width:20px;text-align:center;transform:rotate(-90deg);transform-origin:50% 50%">4</div>
<div class="t rn" style="left:-1px;top:242.9px;width:20px;text-align:center;transform:rotate(-90deg);transform-origin:50% 50%">5</div>
<div class="t rn" style="left:-1px;top:280.7px;width:20px;text-align:center;transform:rotate(-90deg);transform-origin:50% 50%">6</div>
<div class="t rn" style="left:-1px;top:318.4px;width:20px;text-align:center;transform:rotate(-90deg);transform-origin:50% 50%">7</div>
<div class="t rn" style="left:-1px;top:356.2px;width:20px;text-align:center;transform:rotate(-90deg);transform-origin:50% 50%">8</div>
<div class="t rn" style="left:-1px;top:393.9px;width:20px;text-align:center;transform:rotate(-90deg);transform-origin:50% 50%">9</div>
<div class="t rn" style="left:-1px;top:431.6px;width:20px;text-align:center;transform:rotate(-90deg);transform-origin:50% 50%">10</div>
<div class="t rn" style="left:-1px;top:469.4px;width:20px;text-align:center;transform:rotate(-90deg);transform-origin:50% 50%">11</div>
<div class="t rn" style="left:-1px;top:507.1px;width:20px;text-align:center;transform:rotate(-90deg);transform-origin:50% 50%">12</div>
<div class="t rn" style="left:-1px;top:544.9px;width:20px;text-align:center;transform:rotate(-90deg);transform-origin:50% 50%">13</div>
<div class="t rn" style="left:-1px;top:582.6px;width:20px;text-align:center;transform:rotate(-90deg);transform-origin:50% 50%">14</div>
<div class="t rn" style="left:-1px;top:620.4px;width:20px;text-align:center;transform:rotate(-90deg);transform-origin:50% 50%">15</div>
<div class="t rn" style="left:-1px;top:658.1px;width:20px;text-align:center;transform:rotate(-90deg);transform-origin:50% 50%">16</div>
<div class="t rn" style="left:-1px;top:695.9px;width:20px;text-align:center;transform:rotate(-90deg);transform-origin:50% 50%">17</div>
<div class="t rn" style="left:-1px;top:733.6px;width:20px;text-align:center;transform:rotate(-90deg);transform-origin:50% 50%">18</div>
<div class="t rn" style="left:-1px;top:771.4px;width:20px;text-align:center;transform:rotate(-90deg);transform-origin:50% 50%">19</div>
<div class="t rn" style="left:-1px;top:809.1px;width:20px;text-align:center;transform:rotate(-90deg);transform-origin:50% 50%">20</div>
<div class="t rn" style="left:-1px;top:846.8px;width:20px;text-align:center;transform:rotate(-90deg);transform-origin:50% 50%">21</div>
<div class="t rn" style="left:-1px;top:884.6px;width:20px;text-align:center;transform:rotate(-90deg);transform-origin:50% 50%">22</div>
<div class="t rn" style="left:-1px;top:922.3px;width:20px;text-align:center;transform:rotate(-90deg);transform-origin:50% 50%">23</div>
<div class="t rn" style="left:-1px;top:960.1px;width:20px;text-align:center;transform:rotate(-90deg);transform-origin:50% 50%">24</div>
<div class="t rn" style="left:-1px;top:997.8px;width:20px;text-align:center;transform:rotate(-90deg);transform-origin:50% 50%">25</div>
<div class="t rn" style="left:-1px;top:1035.6px;width:20px;text-align:center;transform:rotate(-90deg);transform-origin:50% 50%">26</div>


<svg style="left:44px;top:223px" width="17" height="16" viewBox="0 0 17 16" fill="none" stroke="#3c4043" stroke-width="1.800"><path d="M16.500 8 H2 M8.300 1 L1.300 8 L8.300 15"/></svg>
<div class="t" id="sbtitle" style="left:46.80px;font-size:14px;letter-spacing:0.471px;top:276px;color:#444746;-webkit-text-stroke:.25px #444746">Pestañas del documento</div>
<div class="abs" style="left:250.500px;top:282.200px;width:10.500px;height:1.700px;background:#3c4043"></div><div class="abs" style="left:254.900px;top:277.800px;width:1.700px;height:10.500px;background:#3c4043"></div>
<div class="abs" style="left:35px;top:309px;width:248px;height:40px;border-radius:20px;background:#d3e3fd"></div>
<svg style="left:55.500px;top:321.500px" width="15" height="15" viewBox="0 0 15 15" fill="none" stroke="#041e49" stroke-width="1.600"><rect x="0.800" y="0.800" width="13.400" height="13.400" rx="1.600"/><path d="M3.600 4.600 H11.400 M3.600 7.500 H11.400 M3.600 10.400 H8.800" stroke-width="1.500"/></svg>
<div class="t" id="sbtab" style="left:81.40px;font-size:14px;letter-spacing:-0.108px;top:322px;color:#041e49;-webkit-text-stroke:.35px #041e49">Pestaña 1</div>
<svg style="left:254.200px;top:323.500px" width="3" height="12" viewBox="0 0 3 12" fill="#3c4043"><circle cx="1.500" cy="1.400" r="1.300"/><circle cx="1.500" cy="5.800" r="1.300"/><circle cx="1.500" cy="10.200" r="1.300"/></svg>
<div class="t" id="sbh1" style="left:43.30px;font-size:12.2px;letter-spacing:0.369px;top:359.500px;font-style:italic;color:#5a5d60">Los encabezados que agregues al</div>
<div class="t" id="sbh2" style="left:43.30px;font-size:12.2px;letter-spacing:0.481px;top:376.500px;font-style:italic;color:#5a5d60">documento se mostrarán aquí.</div>



<div class="abs" style="left:639px;top:203px;width:606px;height:30.500px;background:#d7d7d7"></div>
<div class="abs" style="left:639px;top:233.500px;width:565px;height:19.500px;background:#d7d7d7"></div>
<div class="abs" id="doctext" style="left:639.500px;top:203px;width:601px;height:51px;overflow:hidden">
<div class="dl" style="top:-8.300px;text-align:justify;text-align-last:justify" id="dl1">El equipo se ha especializado en la búsqueda de información fotográfica dentro del Archivo</div>
<div class="dl" style="top:11.100px;text-align:justify;text-align-last:justify" id="dl2">General de la Nación, en el acervo de la Dirección Federal de Seguridad, donde ha</div>
<div class="dl" style="top:30.500px;white-space:pre" id="dl3">rescatado gran variedad de documentos sobre la llamada “Guerra  Sucia” en México.</div>
</div>


<div class="abs" id="dlg" style="left:598px;top:253px;width:682px;height:439px;background:#fff;border:2px solid #2f6fe4;border-radius:21px;box-shadow:0 1px 3px rgba(0,0,0,.28),0 2px 5px 1px rgba(0,0,0,.12)"></div>
<svg style="left:628px;top:277px" width="18" height="17" viewBox="0 0 18 17"><path d="M4.200 1.300 C4.500 3.800 5.100 4.400 7.600 4.700 C5.100 5 4.500 5.600 4.200 8.100 C3.900 5.600 3.300 5 0.800 4.700 C3.300 4.400 3.900 3.800 4.200 1.300Z" fill="#444746" stroke="#444746" stroke-width=".4"/><g transform="rotate(-43.500 3.200 15.600)"><path d="M5.200 13.900 H19.600 Q20.400 13.900 20.400 14.700 V16.500 Q20.400 17.300 19.600 17.300 H5.200 Q4.400 17.300 4.400 16.500 V14.700 Q4.400 13.900 5.200 13.900Z" fill="none" stroke="#444746" stroke-width="1.500"/><rect x="17.200" y="13.900" width="3.200" height="3.400" fill="#444746"/></g></svg>
<div class="t" id="dtitle" style="left:656.50px;font-size:13.6px;letter-spacing:0.575px;top:278.500px;color:#4a4d50">Desarrollar</div>
<svg style="left:1237px;top:280.300px" width="10" height="10" viewBox="0 0 10 10" stroke="#3c4043" stroke-width="1.500" fill="none"><path d="M0.500 0.500 L9.500 9.500 M9.500 0.500 L0.500 9.500"/></svg>
<div class="t bl" id="b1" style="top:315.8px">El equipo de investigación ha profundizado su labor en la búsqueda de información</div>
<div class="t bl" id="b2" style="top:334.8px">fotográfica, concentrándose específicamente en el Archivo General de la Nación (AGN).</div>
<div class="t bl" id="b3" style="top:353.8px">Dentro de este vasto repositorio, se han enfocado en el acervo de la antigua Dirección</div>
<div class="t bl" id="b4" style="top:372.8px">Federal de Seguridad (DFS), un departamento que jugó un papel crucial durante un periodo</div>
<div class="t bl" id="b5" style="top:391.8px">convulso en la historia de México.</div>
<div class="t bl" id="b6" style="top:429.8px">Gracias a esta meticulosa labor, se ha logrado rescatar una considerable variedad de</div>
<div class="t bl" id="b7" style="top:448.8px">documentos gráficos. Estas fotografías son de vital importancia para comprender y</div>
<div class="t bl" id="b8" style="top:467.8px">documentar la llamada &quot;Guerra Sucia&quot; en México, un periodo caracterizado por la represión</div>
<div class="t bl" id="b9" style="top:486.8px">política, la disidencia y los conflictos sociales. Las imágenes obtenidas proporcionan una</div>
<div class="t bl" id="b10" style="top:505.8px">perspectiva visual invaluable sobre los eventos, los protagonistas y las consecuencias de</div>
<div class="t bl" id="b11" style="top:524.8px">este oscuro capítulo, contribuyendo significativamente a la memoria histórica y a la</div>
<div class="t bl" id="b12" style="top:543.8px">investigación académica sobre los derechos humanos y la violencia de Estado en el país.</div>
<div class="abs" style="left:600px;top:582px;width:678px;height:1px;background:#c4c7c5"></div>
<div class="t" id="foot" style="left:624.20px;font-size:11.8px;letter-spacing:0.210px;top:599px;color:#66696c">Esta es una ayuda de escritura creativa y no pretende ser fáctica. <span id="footlink" style="text-decoration:underline;text-underline-offset:1.500px">Más información</span></div>
<svg style="left:1190.300px;top:595.800px" width="19" height="17" viewBox="0 0 19 17" fill="none" stroke="#5f6368" stroke-width="1.300" stroke-linejoin="miter"><path d="M0.700 6.800 H5 V16 H0.700Z M5 6.800 L10.200 0.900 L11 1.700 L10 6.800 H17.800 L18.300 8 L15.300 16 H5"/></svg>
<svg style="left:1226.500px;top:597.200px" width="19" height="17" viewBox="0 0 19 17" fill="none" stroke="#5f6368" stroke-width="1.300" stroke-linejoin="miter"><g transform="rotate(180 9.500 8.500)"><path d="M0.700 6.800 H5 V16 H0.700Z M5 6.800 L10.200 0.900 L11 1.700 L10 6.800 H17.800 L18.300 8 L15.300 16 H5"/></g></svg>
<div class="abs" style="left:612px;top:635.500px;width:356px;height:42px;border-radius:21px;background:#f0f4f9"></div>
<div class="t" id="ph" style="left:628.30px;font-size:11.8px;letter-spacing:0.259px;top:650.500px;color:#66696c">Definir mejor con una instrucción</div>
<div class="abs" style="left:981px;top:637px;width:156px;height:40px;border-radius:20px;border:1px solid #747775;background:#fff"></div>
<div class="t" id="refine" style="left:1005.40px;font-size:14px;letter-spacing:0.476px;top:650px;color:#0b57d0;-webkit-text-stroke:.35px #0b57d0">Definir mejor</div>
<svg style="left:1105.300px;top:653.800px" width="7" height="3.600" viewBox="0 0 10 5" fill="#0b57d0"><path d="M0 0 H10 L5 5Z"/></svg>
<div class="abs" style="left:1145px;top:637px;width:121px;height:40px;border-radius:20px;background:#0b57d0"></div>
<div class="abs" style="left:1230px;top:637px;width:1px;height:40px;background:#0a3f96"></div>
<div class="t" id="insert" style="left:1169.30px;font-size:14px;letter-spacing:0.657px;top:650px;color:#fff;-webkit-text-stroke:.35px #fff">Insertar</div>
<svg style="left:1241.500px;top:656px" width="9" height="4.500" viewBox="0 0 10 5" fill="#fff"><path d="M0 0 H10 L5 5Z"/></svg>

<div class="abs" style="left:1903px;top:391px;width:8px;height:617px;border-radius:4px;background:#dadce0"></div>
<div class="abs" style="left:1880px;top:1018px;width:35px;height:23px;overflow:hidden"><div class="abs" style="left:7px;top:6px;width:60px;height:60px;border-radius:30px;background:#fff;border:1px solid #ececee"></div></div>
<div class="abs" style="left:0;top:1040px;width:1919px;height:1px;background:#343f28"></div>
<div class="abs" style="left:47px;top:1040px;width:288px;height:1px;background:#b9b9b9"></div>

</div>
</body>
</html>
